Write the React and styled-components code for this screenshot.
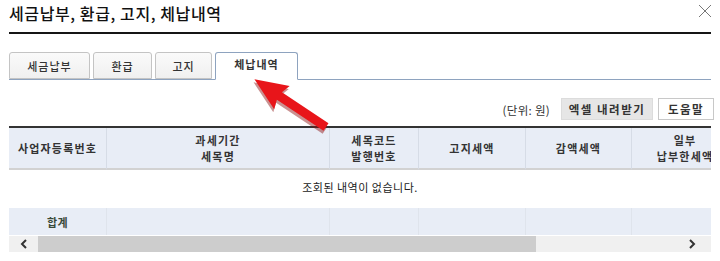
import React from "react";
import styled, { createGlobalStyle } from "styled-components";

const Global = createGlobalStyle`
  html, body { margin: 0; padding: 0; background: #fff; }
  body { font-family: "Noto Sans CJK KR", "Noto Sans", sans-serif; color: #222; }
  * { box-sizing: border-box; }
`;

const Page = styled.div`
  position: relative;
  width: 720px;
  height: 261px;
  padding: 0 9px;
  overflow: hidden;
`;

const TitleBar = styled.div`
  display: flex;
  align-items: flex-start;
  justify-content: space-between;
  height: 34px;
  border-bottom: 2px solid #151515;
`;

const Title = styled.h1`
  margin: 0;
  padding-top: 1px;
  font-size: 16px;
  line-height: 24px;
  font-weight: 500;
  color: #111;
  letter-spacing: 0.6px;
`;

const Close = styled.button`
  position: absolute;
  top: 4px;
  right: 8px;
  width: 14px;
  height: 14px;
  padding: 0;
  border: 0;
  background: none;
  display: flex;
`;

const TabBar = styled.div`
  display: flex;
  align-items: flex-end;
  gap: 3px;
  margin-top: 18px;
  height: 28px;
  border-bottom: 1px solid #8ea3bf;
`;

const Tab = styled.div`
  width: ${(p) => p.$w}px;
  height: ${(p) => (p.$active ? 28 : 27)}px;
  margin-bottom: ${(p) => (p.$active ? -1 : 0)}px;
  display: flex;
  align-items: center;
  justify-content: center;
  font-size: 11px;
  letter-spacing: 1px;
  font-weight: ${(p) => (p.$active ? 700 : 500)};
  color: #333;
  border: 1px solid ${(p) => (p.$active ? "#8ea3bf" : "#c4c4c4")};
  border-bottom: ${(p) => (p.$active ? "1px solid #fff" : "1px solid #c4c4c4")};
  border-radius: 3px 3px 0 0;
  background: ${(p) => (p.$active ? "#fff" : "linear-gradient(#fafafa, #f0f0f0)")};
  padding-bottom: ${(p) => (p.$active ? 4 : 0)}px;
`;

const Toolbar = styled.div`
  display: flex;
  justify-content: flex-end;
  align-items: center;
  gap: 5px;
  margin-top: 17px;
  margin-right: -3px;
  height: 23px;
`;

const Unit = styled.span`
  font-size: 11.5px;
  letter-spacing: 0.3px;
  color: #333;
  margin-right: 6px;
  padding-top: 3px;
`;

const Button = styled.button`
  height: 22px;
  width: ${(p) => p.$w}px;
  padding: 0;
  font-family: inherit;
  font-size: 11.5px;
  font-weight: 700;
  letter-spacing: 1.5px;
  color: #333;
  border: 1px solid ${(p) => (p.$primary ? "#dcdcdc" : "#c8c8c8")};
  background: ${(p) => (p.$primary ? "#e6e6e6" : "#fff")};
`;

const TableWrap = styled.div`
  margin-top: 6px;
  overflow: hidden;
  border-top: 2px solid #333;
`;

const Table = styled.div`
  width: 729px;
  display: grid;
  grid-template-columns: 97px 223px 89px 107px 106px 107px;
`;

const HeadCell = styled.div`
  height: 42px;
  display: flex;
  align-items: center;
  justify-content: center;
  text-align: center;
  background: #e8edf6;
  border-left: ${(p) => (p.$first ? "0" : "1px solid #d6dce6")};
  border-bottom: 2px solid #d2d2d2;
  font-size: 11px;
  line-height: 16px;
  font-weight: 700;
  letter-spacing: 1.2px;
  color: #333;
  white-space: nowrap;
`;

const EmptyRow = styled.div`
  grid-column: 1 / -1;
  height: 38px;
  display: flex;
  align-items: center;
  justify-content: center;
  font-size: 11px;
  letter-spacing: 0.5px;
  color: #222;
  width: 702px;
  padding-bottom: 4px;
`;

const SumCell = styled.div`
  height: 27px;
  display: flex;
  align-items: center;
  justify-content: center;
  background: #e8edf6;
  border-left: ${(p) => (p.$first ? "0" : "1px solid #dfe4ec")};
  font-size: 11px;
  font-weight: 700;
  color: #3a4a3a;
  letter-spacing: 0.5px;
`;

const ScrollBar = styled.div`
  display: flex;
  align-items: center;
  height: 16px;
  margin-top: 1px;
  background: #f0f0f0;
`;

const ScrollArrow = styled.div`
  width: ${(p) => p.$w}px;
  height: 100%;
  display: flex;
  align-items: center;
  justify-content: center;
`;

const Track = styled.div`
  flex: 1;
  height: 100%;
  display: flex;
`;

const Thumb = styled.div`
  height: 100%;
  background: #cdcdcd;
`;

const Arrow = styled.svg`
  position: absolute;
  left: 240px;
  top: 68px;
  pointer-events: none;
`;

const Chevron = ({ dir }) => (
  <svg width="8" height="10" viewBox="0 0 8 10">
    <path
      d={dir === "left" ? "M6 1 L2 5 L6 9" : "M2 1 L6 5 L2 9"}
      fill="none"
      stroke="#333"
      strokeWidth="2"
    />
  </svg>
);

const headers = [
  ["사업자등록번호"],
  ["과세기간", "세목명"],
  ["세목코드", "발행번호"],
  ["고지세액"],
  ["감액세액"],
  ["일부", "납부한세액"],
];

export default function App() {
  const arrowPts = "0,-4.5 56,-4.5 53,-14 86,0 53,14 56,4.5 0,4.5";
  return (
    <>
      <Global />
      <Page>
        <TitleBar>
          <Title>세금납부, 환급, 고지, 체납내역</Title>
        </TitleBar>
        <Close aria-label="close">
          <svg width="14" height="14" viewBox="0 0 14 14">
            <path d="M1 1 L13 13 M13 1 L1 13" stroke="#777" strokeWidth="1" />
          </svg>
        </Close>
        <TabBar>
          <Tab $w={81}>세금납부</Tab>
          <Tab $w={59}>환급</Tab>
          <Tab $w={57}>고지</Tab>
          <Tab $w={83} $active>체납내역</Tab>
        </TabBar>
        <Toolbar>
          <Unit>(단위: 원)</Unit>
          <Button $primary $w={92}>엑셀 내려받기</Button>
          <Button $w={56}>도움말</Button>
        </Toolbar>
        <TableWrap>
          <Table>
            {headers.map((h, i) => (
              <HeadCell key={i} $first={i === 0}>
                <div>
                  {h.map((line, j) => (
                    <div key={j}>{line}</div>
                  ))}
                </div>
              </HeadCell>
            ))}
            <EmptyRow>조회된 내역이 없습니다.</EmptyRow>
            {headers.map((_, i) => (
              <SumCell key={i} $first={i === 0}>
                {i === 0 ? "합계" : ""}
              </SumCell>
            ))}
          </Table>
        </TableWrap>
        <ScrollBar>
          <ScrollArrow $w={29}>
            <Chevron dir="left" />
          </ScrollArrow>
          <Track>
            <Thumb style={{ width: "78.5%" }} />
          </Track>
          <ScrollArrow $w={38}>
            <Chevron dir="right" />
          </ScrollArrow>
        </ScrollBar>
        <Arrow width="100" height="70" viewBox="0 0 100 70">
          <g transform="translate(86,59) rotate(213.7)">
            <polygon points={arrowPts} fill="#8a0b0b" opacity="0.45" transform="translate(-1,-3)" />
            <polygon points={arrowPts} fill="#e8151a" />
          </g>
        </Arrow>
      </Page>
    </>
  );
}
